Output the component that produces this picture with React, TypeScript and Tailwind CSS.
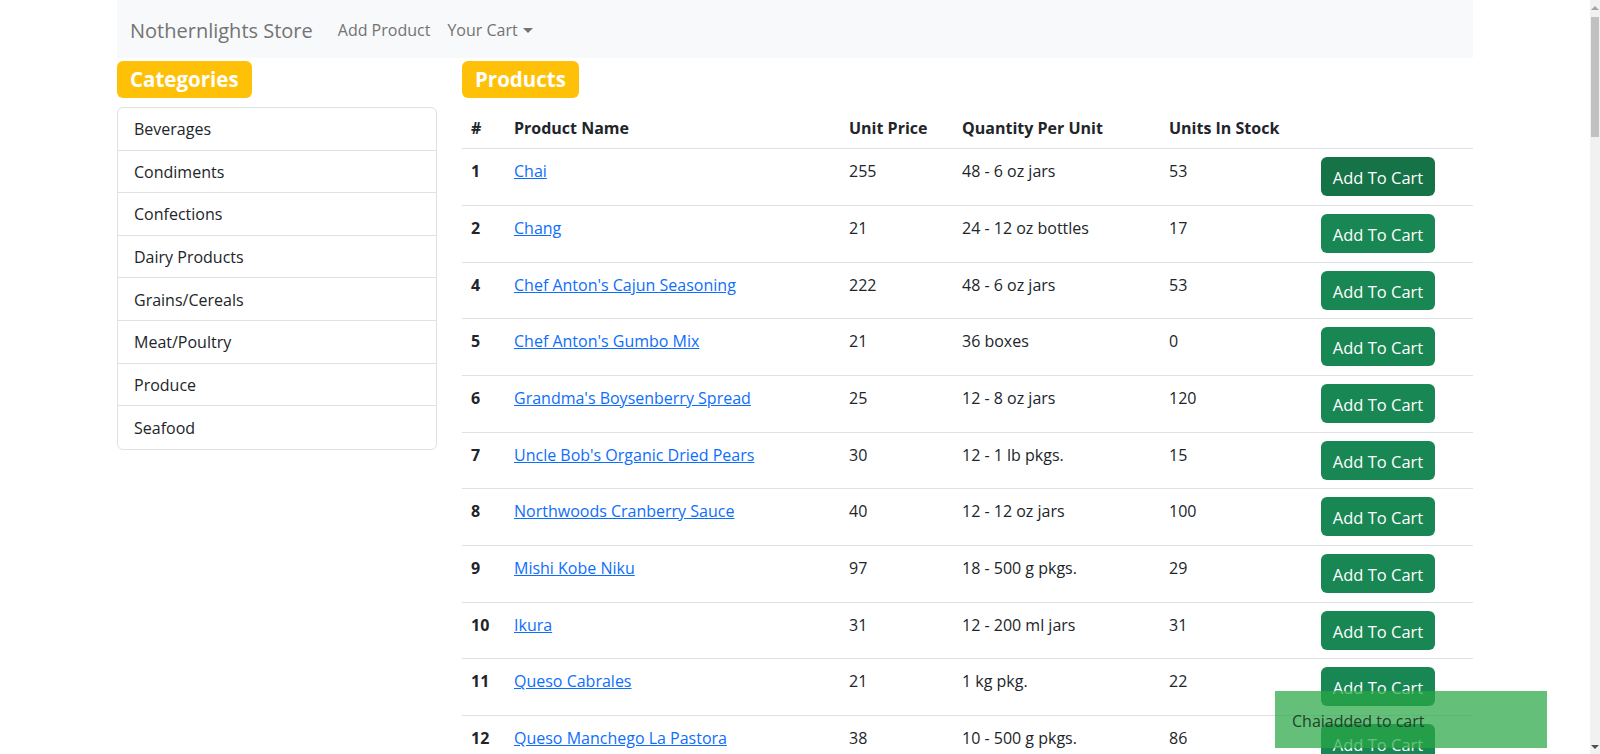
import React from 'react';

const categories = [
  'Beverages',
  'Condiments',
  'Confections',
  'Dairy Products',
  'Grains/Cereals',
  'Meat/Poultry',
  'Produce',
  'Seafood',
];

const products = [
  { id: 1, name: 'Chai', price: 255, qty: '48 - 6 oz jars', stock: 53 },
  { id: 2, name: 'Chang', price: 21, qty: '24 - 12 oz bottles', stock: 17 },
  { id: 4, name: "Chef Anton's Cajun Seasoning", price: 222, qty: '48 - 6 oz jars', stock: 53 },
  { id: 5, name: "Chef Anton's Gumbo Mix", price: 21, qty: '36 boxes', stock: 0 },
  { id: 6, name: "Grandma's Boysenberry Spread", price: 25, qty: '12 - 8 oz jars', stock: 120 },
  { id: 7, name: "Uncle Bob's Organic Dried Pears", price: 30, qty: '12 - 1 lb pkgs.', stock: 15 },
  { id: 8, name: 'Northwoods Cranberry Sauce', price: 40, qty: '12 - 12 oz jars', stock: 100 },
  { id: 9, name: 'Mishi Kobe Niku', price: 97, qty: '18 - 500 g pkgs.', stock: 29 },
  { id: 10, name: 'Ikura', price: 31, qty: '12 - 200 ml jars', stock: 31 },
  { id: 11, name: 'Queso Cabrales', price: 21, qty: '1 kg pkg.', stock: 22 },
  { id: 12, name: 'Queso Manchego La Pastora', price: 38, qty: '10 - 500 g pkgs.', stock: 86 },
  { id: 13, name: 'Konbu', price: 6, qty: '2 kg box', stock: 24 },
  { id: 14, name: 'Tofu', price: 23.25, qty: '40 - 100 g pkgs.', stock: 35 },
];

const App: React.FC = () => {
  return (
    <div className="flex h-screen overflow-hidden bg-white text-[#212529] text-[16px] leading-[25px] font-['Open_Sans',sans-serif]">
      <div className="flex-1 relative">
        <div className="w-[1356px] mx-auto">
          {/* navbar */}
          <nav className="h-[58px] bg-[#f8f9fa] flex items-center px-[13px] pt-[2px]">
            <span className="text-[20px] text-[#737373] mr-[25px]">Nothernlights Store</span>
            <span className="text-[#737373] mr-[17px]">Add Product</span>
            <span className="text-[#737373] flex items-center">
              Your Cart
              <span className="ml-[5px] mt-[1px] w-0 h-0 border-l-[5px] border-r-[5px] border-t-[5px] border-l-transparent border-r-transparent border-t-[#737373]" />
            </span>
          </nav>

          <div className="flex gap-[25px] mt-[3px]">
            {/* categories */}
            <div className="w-[320px] shrink-0">
              <h3 className="inline-block bg-[#ffc107] text-white font-bold text-[20.5px] leading-[37px] h-[37px] px-[13px] rounded-[6px]">
                Categories
              </h3>
              <ul className="mt-[9px] border border-[#dee2e6] rounded-[6px]">
                {categories.map((c, i) => (
                  <li
                    key={c}
                    className={
                      'h-[42.6px] flex items-center px-[16px] pt-[2px] ' +
                      (i < categories.length - 1 ? 'border-b border-[#dee2e6]' : '')
                    }
                  >
                    {c}
                  </li>
                ))}
              </ul>
            </div>

            {/* products */}
            <div className="flex-1">
              <h3 className="inline-block bg-[#ffc107] text-white font-bold text-[20.5px] leading-[37px] h-[37px] px-[13px] rounded-[6px]">
                Products
              </h3>
              <table className="mt-[9px] w-full table-fixed border-collapse">
                <colgroup>
                  <col className="w-[43px]" />
                  <col className="w-[335px]" />
                  <col className="w-[113px]" />
                  <col className="w-[207px]" />
                  <col className="w-[152px]" />
                  <col />
                </colgroup>
                <thead>
                  <tr className="border-b border-[#dee2e6] h-[41.7px] text-left">
                    <th className="px-[9px] pt-[2px] font-bold">#</th>
                    <th className="px-[9px] pt-[2px] font-bold">Product Name</th>
                    <th className="px-[9px] pt-[2px] font-bold">Unit Price</th>
                    <th className="px-[9px] pt-[2px] font-bold">Quantity Per Unit</th>
                    <th className="px-[9px] pt-[2px] font-bold">Units In Stock</th>
                    <th className="px-[9px]" />
                  </tr>
                </thead>
                <tbody>
                  {products.map((p, i) => (
                    <tr key={p.id} className="border-b border-[#dee2e6] h-[56.7px] align-top">
                      <th className="px-[9px] pt-[10px] text-left font-bold">{p.id}</th>
                      <td className="px-[9px] pt-[10px]">
                        <a href="#" className="text-[#0d6efd] underline">
                          {p.name}
                        </a>
                      </td>
                      <td className="px-[9px] pt-[10px]">{p.price}</td>
                      <td className="px-[9px] pt-[10px]">{p.qty}</td>
                      <td className="px-[9px] pt-[10px]">{p.stock}</td>
                      <td className="px-[9px] pt-[8px]">
                        <button
                          className={
                            'w-[114px] h-[39px] rounded-[6px] text-white text-[16.5px] pt-[2px] ' +
                            (i === 0 ? 'bg-[#157347]' : 'bg-[#198754]')
                          }
                        >
                          Add To Cart
                        </button>
                      </td>
                    </tr>
                  ))}
                </tbody>
              </table>
            </div>
          </div>
        </div>

        {/* toast */}
        <div className="absolute right-[43px] bottom-[6px] w-[272px] h-[57px] bg-[rgba(40,167,69,0.72)] flex items-center px-[17px] pt-[3px] text-[#22402a]">
          Chaiadded to cart
        </div>
      </div>

      {/* scrollbar */}
      <div className="w-[10px] shrink-0 bg-[#f1f1f1] flex flex-col items-center">
        <div className="h-[15px] flex items-center justify-center">
          <span className="w-0 h-0 border-l-[4px] border-r-[4px] border-b-[4px] border-l-transparent border-r-transparent border-b-[#a3a3a3]" />
        </div>
        <div className="w-[8px] h-[120px] bg-[#c1c1c1] mt-[2px]" />
        <div className="flex-1" />
        <div className="h-[15px] flex items-center justify-center">
          <span className="w-0 h-0 border-l-[4px] border-r-[4px] border-t-[4px] border-l-transparent border-r-transparent border-t-[#505050]" />
        </div>
      </div>
    </div>
  );
};

export default App;
